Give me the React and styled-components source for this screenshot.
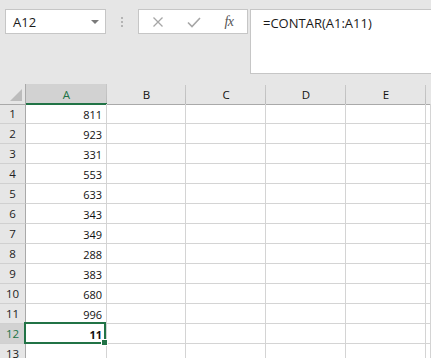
import React from "react";
import styled, { createGlobalStyle } from "styled-components";

const GlobalStyle = createGlobalStyle`
  html, body {
    margin: 0;
    padding: 0;
    background: #ffffff;
    overflow: hidden;
  }
  * {
    box-sizing: border-box;
  }
`;

const Page = styled.div`
  width: 431px;
  height: 358px;
  overflow: hidden;
  background: #ffffff;
`;

const TopBar = styled.div`
  display: flex;
  align-items: flex-start;
  height: 84px;
  padding: 9px 0 0 5px;
  background: #e6e6e6;
`;

const NameBox = styled.div`
  display: flex;
  align-items: center;
  width: 101px;
  height: 25px;
  padding: 0 6px 0 7px;
  background: #ffffff;
  border: 1px solid #c6c6c6;
  font-family: "Open Sans", sans-serif;
  font-size: 13px;
  color: #1a1a1a;
`;

const Caret = styled.span`
  margin-left: auto;
  width: 0;
  height: 0;
  border-left: 4px solid transparent;
  border-right: 4px solid transparent;
  border-top: 4px solid #7a7a7a;
`;

const Grip = styled.div`
  display: flex;
  flex-direction: column;
  justify-content: center;
  align-items: center;
  gap: 2px;
  width: 32px;
  height: 25px;
`;

const GripDot = styled.span`
  width: 2px;
  height: 2px;
  background: #b4b4b4;
`;

const FxBox = styled.div`
  display: flex;
  align-items: center;
  width: 110px;
  height: 25px;
  background: #ffffff;
  border: 1px solid #c6c6c6;
`;

const FxButton = styled.div`
  display: flex;
  align-items: center;
  justify-content: center;
  width: ${(p) => p.$w}px;
  height: 100%;
`;

const FxLabel = styled.span`
  font-family: "Liberation Serif", serif;
  font-style: italic;
  font-size: 14px;
  color: #555555;
  letter-spacing: -0.5px;
`;

const FormulaInput = styled.div`
  flex: 1;
  height: 65px;
  margin-left: 2px;
  padding: 4px 0 0 12px;
  background: #ffffff;
  border: 1px solid #c6c6c6;
  border-right: none;
  font-family: "Open Sans", sans-serif;
  font-size: 13px;
  color: #1a1a1a;
`;

const Sheet = styled.div`
  display: grid;
  grid-template-columns: 26px 81px 79px 80px 80px 80px 1fr;
  grid-auto-rows: 20px;
  font-family: "Open Sans", sans-serif;
  font-size: 11px;
  color: #111111;
`;

const Corner = styled.div`
  position: relative;
  height: 21px;
  background: #e6e6e6;
  border-right: 1px solid #a9a9a9;
  border-bottom: 1px solid #a9a9a9;

  &::after {
    content: "";
    position: absolute;
    right: 3px;
    bottom: 3px;
    width: 0;
    height: 0;
    border-left: 12px solid transparent;
    border-bottom: 12px solid #bcbcbc;
  }
`;

const ColHeader = styled.div`
  display: flex;
  align-items: center;
  justify-content: center;
  height: 21px;
  padding-top: 1px;
  font-size: 11.5px;
  background: ${(p) => (p.$active ? "#d2d2d2" : "#e6e6e6")};
  color: ${(p) => (p.$active ? "#217346" : "#111111")};
  border-bottom: ${(p) => (p.$active ? "2px solid #217346" : "1px solid #a9a9a9")};
  background-image: ${(p) =>
    p.$last ? "none" : "linear-gradient(#c8c8c8, #bdbdbd)"};
  background-size: 1px 19px;
  background-position: right bottom;
  background-repeat: no-repeat;
`;

const RowHeader = styled.div`
  display: flex;
  align-items: center;
  justify-content: center;
  font-size: 11.5px;
  background: ${(p) => (p.$active ? "#d2d2d2" : "#e6e6e6")};
  color: ${(p) => (p.$active ? "#217346" : "#222222")};
  border-right: 1px solid #a9a9a9;
  border-bottom: 1px solid #d0d0d0;
`;

const Cell = styled.div`
  position: relative;
  display: flex;
  align-items: center;
  justify-content: flex-end;
  padding: 1px 4px 0 0;
  border-right: 1px solid #d4d4d4;
  border-bottom: 1px solid #d4d4d4;
  font-weight: ${(p) => (p.$bold ? 700 : 400)};
`;

const Selection = styled.div`
  position: absolute;
  top: -2px;
  left: -2px;
  right: 0;
  bottom: -1px;
  border: 2px solid #217346;
  z-index: 2;
  pointer-events: none;
`;

const FillHandle = styled.div`
  position: absolute;
  right: -3px;
  bottom: -3px;
  width: 5px;
  height: 5px;
  background: #217346;
  box-shadow: 0 0 0 1px #ffffff;
`;

const columns = ["A", "B", "C", "D", "E", ""];
const values = [811, 923, 331, 553, 633, 343, 349, 288, 383, 680, 996];

export default function App() {
  const rows = [...values.map(String), "11", ""];

  return (
    <Page>
      <GlobalStyle />
      <TopBar>
        <NameBox>
          A12
          <Caret />
        </NameBox>
        <Grip>
          <GripDot />
          <GripDot />
          <GripDot />
        </Grip>
        <FxBox>
          <FxButton $w={38}>
            <svg width="12" height="12" viewBox="0 0 12 12">
              <path d="M1.5 1.5 L10.5 10.5 M10.5 1.5 L1.5 10.5" stroke="#a6a6a6" strokeWidth="1.3" fill="none" />
            </svg>
          </FxButton>
          <FxButton $w={34}>
            <svg width="14" height="12" viewBox="0 0 14 12">
              <path d="M1 6.5 L5 10.5 L13 2" stroke="#a6a6a6" strokeWidth="1.6" fill="none" />
            </svg>
          </FxButton>
          <FxButton $w={36}>
            <FxLabel>fx</FxLabel>
          </FxButton>
        </FxBox>
        <FormulaInput>=CONTAR(A1:A11)</FormulaInput>
      </TopBar>
      <Sheet>
        <Corner />
        {columns.map((c, i) => (
          <ColHeader key={c || "f"} $active={c === "A"} $last={i === columns.length - 1}>
            {c}
          </ColHeader>
        ))}
        {rows.map((v, r) => {
          const n = r + 1;
          const active = n === 12;
          return (
            <React.Fragment key={n}>
              <RowHeader $active={active}>{n}</RowHeader>
              <Cell $bold={active}>
                {v}
                {active && (
                  <Selection>
                    <FillHandle />
                  </Selection>
                )}
              </Cell>
              {columns.slice(1).map((c) => (
                <Cell key={c || "f"} />
              ))}
            </React.Fragment>
          );
        })}
      </Sheet>
    </Page>
  );
}
